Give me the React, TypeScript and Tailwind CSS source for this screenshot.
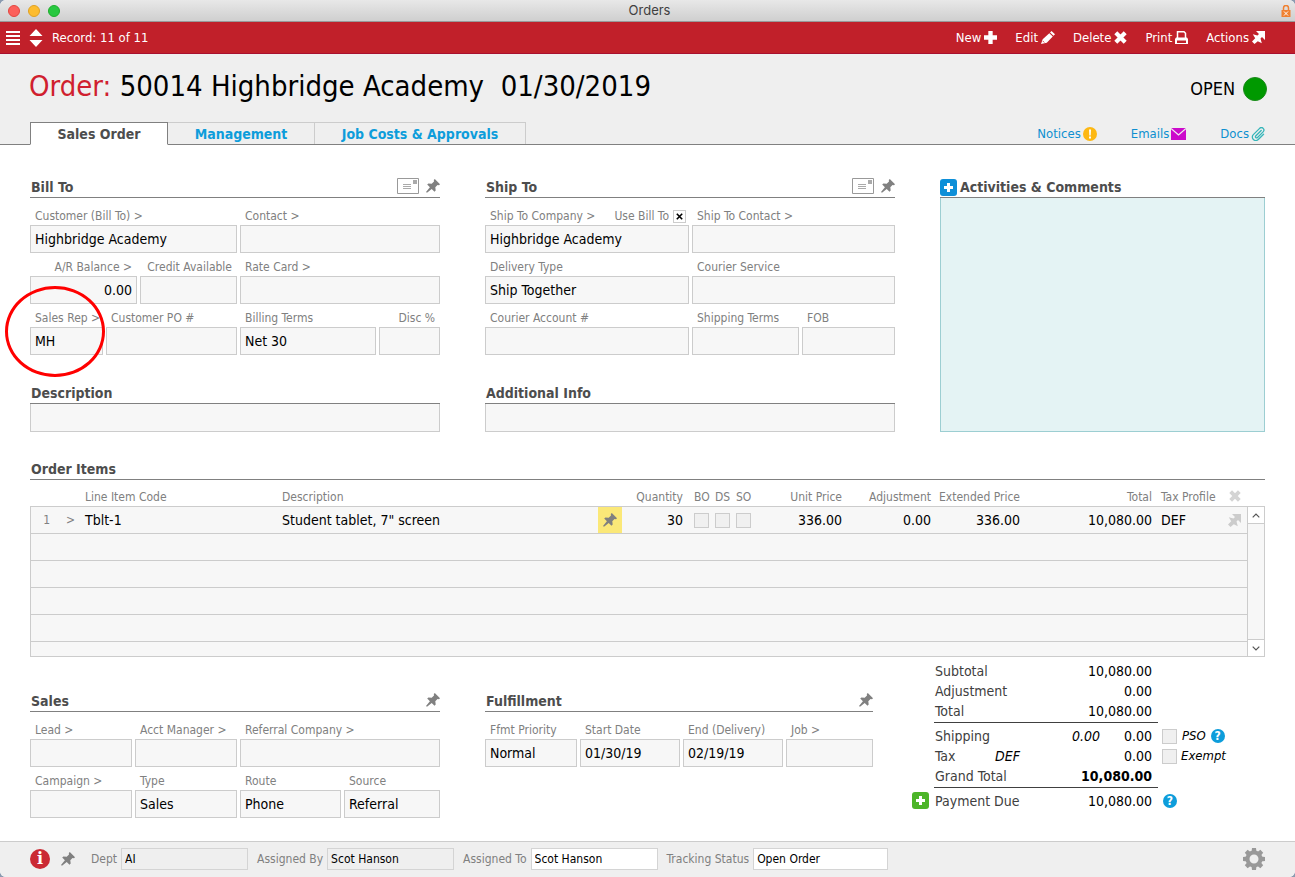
import { ReactNode, useId } from 'react';
import clsx from 'clsx';

interface FieldProps {
  label: string;
  value?: string;
  right?: boolean;
  extra?: ReactNode;
  children?: ReactNode;
}

interface IconProps {
  className?: string;
}

const PinIcon = ({ className }: IconProps) => (
  <svg viewBox="0 0 14 14" className={clsx('size-3.5 shrink-0', className)} fill="currentColor" aria-hidden="true">
    <path d="M8.800 0L14 5.200l-1 1-1.500-.2-2.200 2.300.4 3.200-1.200 1.200-2.800-2.700L1 13.800l-1-.9 3.900-4.600L1.200 5.600l1.200-1.200 3.300.4L8 2.500 7.800 1z" />
  </svg>
);

const CrossIcon = ({ className }: IconProps) => (
  <svg viewBox="0 0 13 13" className={className} fill="none" stroke="currentColor" strokeWidth="4.2" aria-hidden="true">
    <path d="M1.800 1.800l9.400 9.400M11.200 1.800l-9.400 9.400" />
  </svg>
);

const ArrowIcon = ({ className }: IconProps) => (
  <svg viewBox="0 0 13 13" className={className} fill="currentColor" aria-hidden="true">
    <path d="M4 0h9v9l-3-3-1.500 1.500 1.300 4.700-4-2L2.500 13 0 10.500l3.200-3.200L.8 3.200l4.700 1.300L7 3z" />
  </svg>
);

const PlusIcon = ({ className }: IconProps) => (
  <svg viewBox="0 0 12 12" className={className} fill="currentColor" aria-hidden="true">
    <path d="M4 0h4v4h4v4H8v4H4V8H0V4h4z" />
  </svg>
);

const PencilIcon = () => (
  <svg viewBox="0 0 14 13" className="h-[13px] w-3.5" fill="currentColor" aria-hidden="true">
    <path d="M10.500 0L14 3.300l-1.500 1.500L9 1.500zM8.300 2.200l3.500 3.300-6 6.300L0 13l1.700-4.800z" />
    <path d="M1.800 10l1.500 1.500" stroke="#c1202a" strokeWidth=".8" />
  </svg>
);

const PrinterIcon = () => (
  <svg viewBox="0 0 13 13" className="size-[13px]" aria-hidden="true">
    <path d="M2.500 7V.8H9l1.500 1.500V7" fill="none" stroke="currentColor" strokeWidth="1.5" />
    <path d="M1 6.500h11l1 1.500v5H0V8z" fill="currentColor" />
    <path d="M2 9.500h9V12H2z" fill="#c1202a" />
  </svg>
);

const LetterIcon = () => (
  <svg viewBox="0 0 22 16" className="h-4 w-[22px]" fill="none" stroke="#999" aria-hidden="true">
    <path d="M.5.5h21v15H.5z" />
    <path d="M6 6.500h8M6 8.500h8M6 10.500h8" stroke="#aaa" />
    <path d="M16 2h4v4h-4z" fill="#aaa" stroke="none" />
  </svg>
);

const PaperclipIcon = () => (
  <svg viewBox="0 0 24 24" className="size-3.5" fill="none" stroke="#35b5b9" strokeWidth="2.2" strokeLinecap="round" aria-hidden="true">
    <path d="M17.500 6l-9.500 9.500a2 2 0 0 0 2.800 2.800l10-10a4.200 4.200 0 0 0-6-6L4 13a6 6 0 0 0 8.500 8.500l9-9" />
  </svg>
);

const GearIcon = () => (
  <svg viewBox="0 0 22 22" className="size-[22px]" aria-hidden="true">
    <g fill="#999">
      <path d="M9 0h4l.5 4h-5zM9 22h4l.5-4h-5zM0 9v4l4 .5v-5zM22 9v4l-4 .5v-5z" />
      <path d="M9 0h4l.5 4h-5zM9 22h4l.5-4h-5zM0 9v4l4 .5v-5zM22 9v4l-4 .5v-5z" transform="rotate(45 11 11)" />
    </g>
    <circle cx="11" cy="11" r="6.5" fill="none" stroke="#999" strokeWidth="4" />
  </svg>
);

const HelpButton = ({ label }: { label: string }) => (
  <button type="button" aria-label={label} className="flex size-3.5 items-center justify-center rounded-full bg-[#0d9ddb] text-xs leading-3 font-bold text-white">
    ?
  </button>
);

function Field({ label, value = '', right, extra, children }: FieldProps) {
  const id = useId();
  return (
    <div className="relative min-w-0">
      <div className="flex h-[23px] items-end justify-between px-[5px]">
        <label htmlFor={id} className={clsx('text-xs leading-[18px] whitespace-nowrap text-[#808080]', right && 'w-full text-right')}>
          {label}
        </label>
        {extra}
      </div>
      <input
        id={id}
        defaultValue={value}
        className={clsx('block h-7 w-full min-w-0 border border-[#ccc] bg-[#f7f7f7] px-1 text-sm outline-none focus:border-[#0d9ddb]', right && 'text-right')}
      />
      {children}
    </div>
  );
}

function SectionHeader({ title, children }: { title: string; children?: ReactNode }) {
  return (
    <div className="flex h-[21px] items-center justify-between border-b border-[#808080]">
      <h2 className="pl-px text-sm font-bold text-[#4d4d4d]">{title}</h2>
      <div className="flex items-center gap-[7px] pb-0.5 text-[#808080]">{children}</div>
    </div>
  );
}

function PinButton({ label }: { label: string }) {
  return (
    <button type="button" aria-label={label}>
      <PinIcon />
    </button>
  );
}

function Check({ label }: { label: string }) {
  return <input type="checkbox" aria-label={label} className="block size-[15px] appearance-none border border-[#ccc] bg-[#f0f0f0] checked:bg-[#0d9ddb]" />;
}

function FooterField({ label, value, className }: { label: string; value: string; className: string }) {
  const id = useId();
  return (
    <div className="flex items-center gap-1">
      <label htmlFor={id} className="text-xs whitespace-nowrap text-[#808080]">{label}</label>
      <input id={id} defaultValue={value} className={clsx('h-[22px] border border-[#d4d4d4] px-[3px] text-xs outline-none', className)} />
    </div>
  );
}

function TotalRow({ label, note, value, bold }: { label: string; note?: ReactNode; value: string; bold?: boolean }) {
  return (
    <div className="flex h-5 items-center px-px pr-1.5 text-sm">
      <span className="flex-1 text-[#404040]">{label}</span>
      {note}
      <span className={clsx(bold ? 'font-bold' : 'w-20', 'text-right')}>{value}</span>
    </div>
  );
}

const orderItems = [
  { line: 1, code: 'Tblt-1', description: 'Student tablet, 7" screen', qty: '30', unit: '336.00', adjustment: '0.00', extended: '336.00', total: '10,080.00', tax: 'DEF' },
];

const toolbar = [
  { label: 'New', icon: <PlusIcon className="size-[13px]" /> },
  { label: 'Edit', icon: <PencilIcon /> },
  { label: 'Delete', icon: <CrossIcon className="size-[13px]" /> },
  { label: 'Print', icon: <PrinterIcon /> },
  { label: 'Actions', icon: <ArrowIcon className="size-[13px]" /> },
];

function OrderItems() {
  const th = 'border-b border-[#ccc] p-0 font-normal whitespace-nowrap';
  const td = 'border-b border-[#ccc] p-0 whitespace-nowrap';
  return (
    <section className="mt-[27px]">
      <SectionHeader title="Order Items" />
      <div className="flex">
        <table className="min-w-0 flex-1 table-fixed border-separate border-spacing-0 text-left">
          <colgroup>
            <col className="w-[20px]" />
            <col className="w-[35px]" />
            <col className="w-[197px]" />
            <col />
            <col className="w-6" />
            <col className="w-[61px]" />
            <col className="w-[74px]" />
            <col className="w-[85px]" />
            <col className="w-[89px]" />
            <col className="w-[89px]" />
            <col className="w-[132px]" />
            <col className="w-[68px]" />
            <col className="w-[27px]" />
          </colgroup>
          <thead>
            <tr className="h-[27px] text-xs text-[#808080]">
              <th className={th} />
              <th className={th} />
              <th className={th}><div className="pt-2">Line Item Code</div></th>
              <th className={th}><div className="pt-2">Description</div></th>
              <th className={th} />
              <th className={th}><div className="pt-2 text-right">Quantity</div></th>
              <th className={th}>
                <div className="ml-[11px] grid w-[63px] grid-cols-3 pt-2">
                  <span>BO</span>
                  <span>DS</span>
                  <span>SO</span>
                </div>
              </th>
              <th className={th}><div className="pt-2 text-right">Unit Price</div></th>
              <th className={th}><div className="pt-2 text-right">Adjustment</div></th>
              <th className={th}><div className="pt-2 text-right">Extended Price</div></th>
              <th className={th}><div className="pt-2 text-right">Total</div></th>
              <th className={th}><div className="pt-2 pl-[9px]">Tax Profile</div></th>
              <th className={th}>
                <button type="button" aria-label="Delete line" className="mt-1.5 ml-[9px] block text-[#d4d4d4]">
                  <CrossIcon className="size-3" />
                </button>
              </th>
            </tr>
          </thead>
          <tbody className="bg-[#f7f7f7] text-sm">
            {orderItems.map((item) => (
              <tr key={item.line} className="h-[27px]">
                <td className={clsx(td, 'border-l text-right text-xs text-[#808080]')}>{item.line}</td>
                <td className={clsx(td, 'text-[#808080]')}>
                  <button type="button" aria-label="Open line" className="ml-4 block text-xs">&gt;</button>
                </td>
                <td className={td}>{item.code}</td>
                <td className={td}>{item.description}</td>
                <td className={clsx(td, 'bg-[#fbe878] text-[#808080]')}>
                  <button type="button" aria-label="Pin line" className="mx-auto block">
                    <PinIcon />
                  </button>
                </td>
                <td className={clsx(td, 'text-right')}>{item.qty}</td>
                <td className={td}>
                  <div className="ml-[11px] flex gap-1.5">
                    <Check label="BO" />
                    <Check label="DS" />
                    <Check label="SO" />
                  </div>
                </td>
                <td className={clsx(td, 'text-right')}>{item.unit}</td>
                <td className={clsx(td, 'text-right')}>{item.adjustment}</td>
                <td className={clsx(td, 'text-right')}>{item.extended}</td>
                <td className={clsx(td, 'text-right')}>{item.total}</td>
                <td className={td}><div className="pl-[9px]">{item.tax}</div></td>
                <td className={td}>
                  <button type="button" aria-label="Line actions" className="ml-2 block text-[#ccc]">
                    <ArrowIcon className="size-[13px]" />
                  </button>
                </td>
              </tr>
            ))}
            {[1, 2, 3, 4].map((n) => (
              <tr key={n} className="h-[27px]">
                <td colSpan={13} className={clsx(td, 'border-l')} />
              </tr>
            ))}
            <tr className="h-[15px]">
              <td colSpan={13} className={clsx(td, 'border-l')} />
            </tr>
          </tbody>
        </table>
        {/* Scroll bar */}
        <div className="mt-[26px] flex w-[18px] flex-col justify-between border border-[#ccc] bg-[#f7f7f7]">
          <button type="button" aria-label="Scroll up" className="flex h-[17px] items-center justify-center border-b border-[#ccc] bg-white">
            <svg viewBox="0 0 8 5" className="h-[5px] w-2" fill="none" stroke="#555" strokeWidth="1.2"><path d="M.7 4.300L4 1l3.300 3.300" /></svg>
          </button>
          <button type="button" aria-label="Scroll down" className="flex h-[17px] items-center justify-center border-t border-[#ccc] bg-white">
            <svg viewBox="0 0 8 5" className="h-[5px] w-2" fill="none" stroke="#555" strokeWidth="1.2"><path d="M.7.7L4 4 7.300.7" /></svg>
          </button>
        </div>
      </div>
    </section>
  );
}

function Totals() {
  return (
    <section className="ml-[39px] grid min-w-0 flex-[353] grid-cols-[22px_224px_1fr] content-start pt-1">
      <div className="col-start-2 border-b border-[#404040] pb-px">
        <TotalRow label="Subtotal" value="10,080.00" />
        <TotalRow label="Adjustment" value="0.00" />
        <TotalRow label="Total" value="10,080.00" />
      </div>
      <div className="col-start-2 border-b border-[#404040] pt-[3px] pb-px">
        <TotalRow label="Shipping" note={<span className="-mr-7 italic">0.00</span>} value="0.00" />
        <TotalRow label="Tax" note={<span className="mr-[52px] italic">DEF</span>} value="0.00" />
        <TotalRow label="Grand Total" value="10,080.00" bold />
      </div>
      <div className="pt-[3px] pl-1 text-sm">
        <div className="flex h-5 items-center gap-[5px]">
          <Check label="PSO" />
          <span className="text-[13px] italic">PSO</span>
          <HelpButton label="PSO help" />
        </div>
        <div className="flex h-5 items-center gap-1">
          <Check label="Exempt" />
          <span className="text-[13px] italic">Exempt</span>
        </div>
      </div>
      <button type="button" aria-label="Add payment" className="mt-1 flex size-[17px] items-center justify-center rounded-[3px] bg-[#4cb528] text-white">
        <PlusIcon className="size-[9px]" />
      </button>
      <div className="pt-[3px]">
        <TotalRow label="Payment Due" value="10,080.00" />
      </div>
      <div className="pt-1.5 pl-[5px]">
        <HelpButton label="Payment help" />
      </div>
    </section>
  );
}

export default function App() {
  return (
    <div className="bg-[#8a9ab0] font-['DejaVu_Sans_Condensed','DejaVu_Sans',sans-serif] text-black">
      <div className="flex min-h-screen flex-col overflow-hidden rounded-md bg-white">
        {/* Window title */}
        <div className="flex h-[22px] items-center border-b border-[#999] bg-linear-to-b from-[#e8e8e8] to-[#cfcfcf] px-2">
          <div className="flex flex-1 gap-2">
            <span className="size-3 rounded-full border border-[#e2463f] bg-[#fc605b]" />
            <span className="size-3 rounded-full border border-[#dfa023] bg-[#fdbc2e]" />
            <span className="size-3 rounded-full border border-[#1dad2b] bg-[#28c840]" />
          </div>
          <div className="font-['Inter',sans-serif] text-[13px] text-[#404040]">Orders</div>
          <div className="-mr-1 flex flex-1 justify-end">
            <svg viewBox="0 0 10 12" className="h-3 w-[10px]" aria-hidden="true">
              <path d="M2.500 6V3a2.500 2.500 0 0 1 5 0v3" fill="none" stroke="#f08030" strokeWidth="1.5" />
              <path d="M.5 5h9v7h-9z" fill="#f08030" />
              <path d="M3 6.500l4 4M7 6.500l-4 4" stroke="#fff" />
            </svg>
          </div>
        </div>

        {/* Toolbar */}
        <div className="flex h-8 items-center justify-between border-b border-[#a8102f] bg-[#c1202a] pr-[30px] pl-1.5 text-[13px] text-white">
          <div className="flex items-center">
            <button type="button" aria-label="Menu">
              <svg viewBox="0 0 14 14" className="size-3.5" stroke="currentColor" strokeWidth="2"><path d="M0 1h14M0 5h14M0 9h14M0 13h14" /></svg>
            </button>
            <button type="button" aria-label="Browse records" className="ml-[9px]">
              <svg viewBox="0 0 14 18" className="h-[18px] w-3.5" fill="currentColor"><path d="M7 0l6.500 7H.5zM7 18l6.500-7H.5z" /></svg>
            </button>
            <span className="ml-[9px]">Record: 11 of 11</span>
          </div>
          <div className="flex items-center gap-[18px]">
            {toolbar.map((item) => (
              <button key={item.label} type="button" className="flex items-center gap-[3px]">
                {item.label}
                {item.icon}
              </button>
            ))}
          </div>
        </div>

        {/* Header */}
        <header className="border-b border-[#808080] bg-[#efefef] px-[30px]">
          <div className="flex h-[68px] items-center justify-between">
            <h1 className="-ml-px pb-1 text-[29px] leading-10 whitespace-pre">
              <span className="text-[#d01f2f]">Order:</span> 50014 Highbridge Academy{'  '}01/30/2019
            </h1>
            <div className="-mr-0.5 flex items-center gap-2 pt-0.5 text-lg">
              OPEN
              <span className="size-6 rounded-full border border-[#1a8a1a] bg-[#009900]" />
            </div>
          </div>
          <div className="-mb-px flex h-[23px] justify-between">
            <nav className="flex text-sm font-bold">
              <button type="button" className="w-[138px] border border-[#808080] border-b-white bg-white text-[#4d4d4d]">Sales Order</button>
              <button type="button" className="mb-px w-[147px] border-t border-r border-[#ccc] text-[#0d9ddb]">Management</button>
              <button type="button" className="mb-px w-[211px] border-t border-r border-[#ccc] text-[#0d9ddb]">Job Costs &amp; Approvals</button>
            </nav>
            <div className="flex items-center gap-[34px] text-[13px] text-[#0d8fd0]">
              <a href="#notices" className="flex items-center gap-0.5">
                Notices
                <svg viewBox="0 0 14 14" className="size-3.5"><circle cx="7" cy="7" r="7" fill="#fdb813" /><path d="M6 2.500h2L7.700 8.500H6.300zM6 9.500h2v2H6z" fill="#fff" /></svg>
              </a>
              <a href="#emails" className="flex items-center gap-0.5">
                Emails
                <svg viewBox="0 0 15 12" className="h-3 w-[15px]"><path d="M0 0h15v12H0z" fill="#cc0acb" /><path d="M0 .5l7.500 6.500L15 .5" fill="none" stroke="#efefef" strokeWidth="1.3" /></svg>
              </a>
              <a href="#docs" className="flex items-center gap-0.5">
                Docs
                <PaperclipIcon />
              </a>
            </div>
          </div>
        </header>

        <main className="flex-1 px-[30px] pt-8 pb-[23px]">
          <div className="grid grid-cols-[410fr_410fr_325fr] gap-x-[45px]">
            <section className="min-w-0">
              <SectionHeader title="Bill To">
                <button type="button" aria-label="Billing address"><LetterIcon /></button>
                <PinButton label="Pin bill to" />
              </SectionHeader>
              <div className="mt-1 grid grid-cols-[207fr_200fr] gap-x-[3px]">
                <Field label="Customer (Bill To) >" value="Highbridge Academy" />
                <Field label="Contact >" />
              </div>
              <div className="grid grid-cols-[107fr_97fr_200fr] gap-x-[3px]">
                <Field label="A/R Balance >" value="0.00" right />
                <Field label="Credit Available" right />
                <Field label="Rate Card >" />
              </div>
              <div className="grid grid-cols-[73fr_131fr_136fr_61fr] gap-x-[3px]">
                <Field label="Sales Rep >" value="MH">
                  {/* Highlight ring */}
                  <div className="pointer-events-none absolute -top-[18px] -left-[25px] z-10 h-[91px] w-[100px] rounded-[50%] border-[3px] border-[#f00]" />
                </Field>
                <Field label="Customer PO #" />
                <Field label="Billing Terms" value="Net 30" />
                <Field label="Disc %" right />
              </div>
              <div className="mt-7">
                <SectionHeader title="Description" />
                <input aria-label="Description" className="block h-7 w-full border border-t-0 border-[#ccc] bg-[#f7f7f7] px-1 text-sm" />
              </div>
            </section>

            <section className="min-w-0">
              <SectionHeader title="Ship To">
                <button type="button" aria-label="Shipping address"><LetterIcon /></button>
                <PinButton label="Pin ship to" />
              </SectionHeader>
              <div className="mt-1 grid grid-cols-[204fr_203fr] gap-x-[3px]">
                <Field
                  label="Ship To Company >"
                  value="Highbridge Academy"
                  extra={
                    <label className="-mr-0.5 flex items-center gap-1 text-xs leading-[18px] whitespace-nowrap text-[#808080]">
                      Use Bill To
                      <span className="relative flex">
                        <input type="checkbox" defaultChecked className="peer size-[13px] appearance-none border border-[#ccc] bg-white" />
                        <svg viewBox="0 0 13 13" className="pointer-events-none absolute inset-0 hidden size-[13px] peer-checked:block" stroke="#000" strokeWidth="1.6"><path d="M3.800 3.800l5.400 5.400M9.200 3.800l-5.400 5.400" /></svg>
                      </span>
                    </label>
                  }
                />
                <Field label="Ship To Contact >" />
              </div>
              <div className="grid grid-cols-[204fr_203fr] gap-x-[3px]">
                <Field label="Delivery Type" value="Ship Together" />
                <Field label="Courier Service" />
              </div>
              <div className="grid grid-cols-[204fr_107fr_93fr] gap-x-[3px]">
                <Field label="Courier Account #" />
                <Field label="Shipping Terms" />
                <Field label="FOB" />
              </div>
              <div className="mt-7">
                <SectionHeader title="Additional Info" />
                <input aria-label="Additional Info" className="block h-7 w-full border border-t-0 border-[#ccc] bg-[#f7f7f7] px-1 text-sm" />
              </div>
            </section>

            <section className="flex min-w-0 flex-col">
              <div className="flex h-[21px] items-center gap-0.5 border-b border-[#808080]">
                <button type="button" aria-label="Add activity" className="flex size-[17px] items-center justify-center rounded-[3px] bg-[#0d8fd8] text-white">
                  <PlusIcon className="size-[9px]" />
                </button>
                <h2 className="pl-px text-sm font-bold text-[#4d4d4d]">Activities &amp; Comments</h2>
              </div>
              <textarea aria-label="Activities & Comments" className="block w-full flex-1 resize-none border border-t-0 border-[#9cced2] bg-[#e4f3f4] p-1 text-sm outline-none" />
            </section>
          </div>

          <OrderItems />

          <div className="flex">
            <section className="min-w-0 flex-[410] pt-[34px]">
              <SectionHeader title="Sales">
                <PinButton label="Pin sales" />
              </SectionHeader>
              <div className="mt-1 grid grid-cols-[102fr_102fr_200fr] gap-x-[3px]">
                <Field label="Lead >" />
                <Field label="Acct Manager >" />
                <Field label="Referral Company >" />
              </div>
              <div className="grid grid-cols-[102fr_102fr_101fr_96fr] gap-x-[3px]">
                <Field label="Campaign >" />
                <Field label="Type" value="Sales" />
                <Field label="Route" value="Phone" />
                <Field label="Source" value="Referral" />
              </div>
            </section>

            <section className="ml-[45px] min-w-0 flex-[388] pt-[34px]">
              <SectionHeader title="Fulfillment">
                <PinButton label="Pin fulfillment" />
              </SectionHeader>
              <div className="mt-1 grid grid-cols-[92fr_100fr_100fr_87fr] gap-x-[3px]">
                <Field label="Ffmt Priority" value="Normal" />
                <Field label="Start Date" value="01/30/19" />
                <Field label="End (Delivery)" value="02/19/19" />
                <Field label="Job >" />
              </div>
            </section>

            <Totals />
          </div>
        </main>

        <footer className="flex h-9 items-center border-t border-[#ccc] bg-[#efefef] px-[30px] pb-px">
          <button type="button" aria-label="Information" className="flex size-5 items-center justify-center rounded-full bg-[#cb2a34] font-['DejaVu_Serif',serif] text-base leading-5 font-bold text-white">i</button>
          <button type="button" aria-label="Pin footer" className="mr-4 ml-[11px] text-[#808080]"><PinIcon /></button>
          <div className="flex flex-1 items-center gap-[9px]">
            <FooterField label="Dept" value="AI" className="w-[127px] bg-[#efefef]" />
            <FooterField label="Assigned By" value="Scot Hanson" className="w-[127px] bg-[#efefef]" />
            <FooterField label="Assigned To" value="Scot Hanson" className="w-[127px] bg-white" />
            <FooterField label="Tracking Status" value="Open Order" className="w-[135px] bg-white" />
          </div>
          <button type="button" aria-label="Settings"><GearIcon /></button>
        </footer>
      </div>
    </div>
  );
}
